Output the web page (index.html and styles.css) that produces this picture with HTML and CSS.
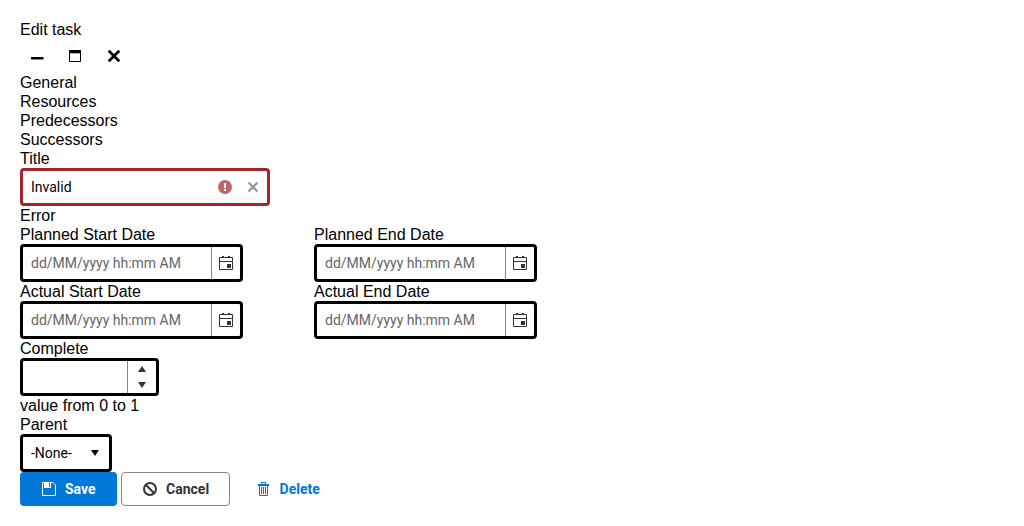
FILE: index.html
```html
<!DOCTYPE html>
<html lang="en">
<head>
<meta charset="utf-8">
<meta name="viewport" content="width=device-width, initial-scale=1">
<title>Edit task</title>
<link rel="stylesheet" href="styles.css">
</head>
<body>
<main class="dialog">
  <header>
    <div class="dialog-title">Edit task</div>
    <div class="window-actions">
      <button class="icon-button" type="button" aria-label="Minimize"><svg width="14" height="14" viewBox="0 0 14 14"><path d="M1 8h12.500v2.500H1z" fill="currentColor"/></svg></button>
      <button class="icon-button" type="button" aria-label="Maximize"><svg width="14" height="14" viewBox="0 0 14 14"><path d="M1.500 1.500h11v11h-11z" fill="none" stroke="currentColor"/><path d="M1 1h12v3.300H1z" fill="currentColor"/></svg></button>
      <button class="icon-button" type="button" aria-label="Close"><svg width="14" height="14" viewBox="0 0 14 14"><path d="M1.700 1.700l10.600 10.600M12.300 1.700L1.700 12.300" stroke="currentColor" stroke-width="2.700"/></svg></button>
    </div>
  </header>
  <div class="tabs" role="tablist">
    <button class="tab" type="button" role="tab">General</button>
    <button class="tab" type="button" role="tab">Resources</button>
    <button class="tab" type="button" role="tab">Predecessors</button>
    <button class="tab" type="button" role="tab">Successors</button>
  </div>
  <form>
    <label class="label" for="title">Title</label>
    <div class="field field-title invalid">
      <input class="input" id="title" type="text" value="Invalid" aria-invalid="true" aria-describedby="title-error">
      <svg class="error-icon" width="14" height="14" viewBox="0 0 14 14"><circle cx="7" cy="7" r="7" fill="currentColor"/><path d="M6 3h2v5H6zM6 9h2v2H6z" fill="#fff"/></svg>
      <button class="clear-button" type="button" aria-label="Clear"><svg width="12" height="12" viewBox="0 0 12 12"><path d="M1.500 1.500l9 9M10.500 1.500l-9 9" stroke="currentColor" stroke-width="2.300"/></svg></button>
    </div>
    <div class="hint" id="title-error">Error</div>
    <div class="dates">
      <div>
        <label class="label" for="planned-start">Planned Start Date</label>
        <div class="field field-date">
          <input class="input" id="planned-start" type="text" placeholder="dd/MM/yyyy hh:mm AM">
          <button class="addon" type="button" aria-label="Open calendar"><svg width="14" height="16" viewBox="0 0 14 16"><path d="M.5 2.500h13v12H.5zM1 6.500h12" fill="none" stroke="currentColor"/><path d="M3 1h2v2H3zM9 1h2v2H9zM8 9h4v4H8z" fill="currentColor"/></svg></button>
        </div>
      </div>
      <div>
        <label class="label" for="planned-end">Planned End Date</label>
        <div class="field field-date">
          <input class="input" id="planned-end" type="text" placeholder="dd/MM/yyyy hh:mm AM">
          <button class="addon" type="button" aria-label="Open calendar"><svg width="14" height="16" viewBox="0 0 14 16"><path d="M.5 2.500h13v12H.5zM1 6.500h12" fill="none" stroke="currentColor"/><path d="M3 1h2v2H3zM9 1h2v2H9zM8 9h4v4H8z" fill="currentColor"/></svg></button>
        </div>
      </div>
      <div>
        <label class="label" for="actual-start">Actual Start Date</label>
        <div class="field field-date">
          <input class="input" id="actual-start" type="text" placeholder="dd/MM/yyyy hh:mm AM">
          <button class="addon" type="button" aria-label="Open calendar"><svg width="14" height="16" viewBox="0 0 14 16"><path d="M.5 2.500h13v12H.5zM1 6.500h12" fill="none" stroke="currentColor"/><path d="M3 1h2v2H3zM9 1h2v2H9zM8 9h4v4H8z" fill="currentColor"/></svg></button>
        </div>
      </div>
      <div>
        <label class="label" for="actual-end">Actual End Date</label>
        <div class="field field-date">
          <input class="input" id="actual-end" type="text" placeholder="dd/MM/yyyy hh:mm AM">
          <button class="addon" type="button" aria-label="Open calendar"><svg width="14" height="16" viewBox="0 0 14 16"><path d="M.5 2.500h13v12H.5zM1 6.500h12" fill="none" stroke="currentColor"/><path d="M3 1h2v2H3zM9 1h2v2H9zM8 9h4v4H8z" fill="currentColor"/></svg></button>
        </div>
      </div>
    </div>
    <label class="label" for="complete">Complete</label>
    <div class="field field-number">
      <input class="input" id="complete" type="text" inputmode="decimal" aria-describedby="complete-hint">
      <div class="addon spinner">
        <button class="spin" type="button" aria-label="Increase"><svg width="8" height="6" viewBox="0 0 8 6"><path d="M0 6l4-6 4 6z" fill="currentColor"/></svg></button>
        <button class="spin" type="button" aria-label="Decrease"><svg width="8" height="6" viewBox="0 0 8 6"><path d="M0 0l4 6 4-6z" fill="currentColor"/></svg></button>
      </div>
    </div>
    <div class="hint" id="complete-hint">value from 0 to 1</div>
    <label class="label" for="parent">Parent</label>
    <div class="field field-select">
      <select class="select" id="parent"><option>-None-</option></select>
      <svg class="select-arrow" width="8" height="6" viewBox="0 0 8 6"><path d="M0 0l4 6 4-6z" fill="currentColor"/></svg>
    </div>
    <div class="actions">
      <button class="button button-primary" type="submit"><svg width="14" height="14" viewBox="0 0 14 14"><path d="M.5.500h10.500l2.500 2.500v10.500H.5z" fill="none" stroke="currentColor"/><path d="M2 0h7v6H2zM7 1v4h1V1z" fill="currentColor" fill-rule="evenodd"/></svg>Save</button>
      <button class="button button-outline" type="button"><svg width="14" height="14" viewBox="0 0 14 14"><circle cx="7" cy="7" r="6" fill="none" stroke="currentColor" stroke-width="2"/><path d="M3 3l8 8" stroke="currentColor" stroke-width="2"/></svg>Cancel</button>
      <button class="button button-link" type="button"><svg width="14" height="14" viewBox="0 0 14 14"><path d="M1 2h11v2H1z" fill="currentColor"/><path d="M4.500 2V.500h4V2M2.500 4v9.500h8V4M4.500 5v7M6.500 5v7M8.500 5v7" fill="none" stroke="currentColor"/></svg>Delete</button>
    </div>
  </form>
</main>
</body>
</html>
```
FILE: styles.css
```css
* {
  box-sizing: border-box;
}

body {
  margin: 0;
  padding: 20px;
  background: #fff;
  color: #000;
  font: 16px/19px "Liberation Sans", Arial, sans-serif;
}

button,
input,
select {
  margin: 0;
  padding: 0;
  border: 0;
  background: transparent;
  color: inherit;
  font: inherit;
}

svg {
  display: block;
  flex: none;
}

.icon-button {
  display: inline-grid;
  place-items: center;
  width: 34px;
  height: 34px;
  vertical-align: top;
}

.tabs {
  display: flex;
  flex-direction: column;
  align-items: flex-start;
}

.label {
  display: block;
  width: fit-content;
}

.field {
  display: flex;
  align-items: center;
  max-width: 100%;
  height: 38px;
  border: 3px solid #000;
  border-radius: 4px;
  font: 14px/20px Roboto, sans-serif;
}

.field-title {
  width: 250px;
}

.field-date {
  width: 223px;
}

.field-number {
  width: 139px;
}

.invalid {
  border-color: #a4262c;
}

.input {
  flex: 1;
  min-width: 0;
  height: 100%;
  padding: 0 8px;
}

.input::placeholder {
  color: #666;
  opacity: 1;
}

.error-icon {
  color: #bf666a;
}

.clear-button {
  display: grid;
  place-items: center;
  width: 28px;
  height: 28px;
  margin-left: 7px;
  color: #999;
}

.addon {
  display: grid;
  place-items: center;
  width: 29px;
  height: 100%;
  border-left: 1px solid #848484;
  color: #333;
}

.spinner {
  grid-template-rows: 1fr 1fr;
}

.spin {
  display: grid;
  place-items: center;
  width: 100%;
  height: 100%;
}

.field-select {
  display: grid;
  width: 92px;
}

.select {
  grid-area: 1 / 1;
  width: 100%;
  height: 100%;
  padding: 0 24px 0 8px;
  appearance: none;
}

.select-arrow {
  grid-area: 1 / 1;
  justify-self: end;
  margin-right: 10px;
  pointer-events: none;
}

.dates {
  display: grid;
  grid-template-columns: repeat(2, 223px);
  column-gap: 71px;
}

.button {
  display: inline-flex;
  align-items: center;
  gap: 9px;
  height: 34px;
  padding: 0 20px 0 21px;
  border: 1px solid transparent;
  border-radius: 4px;
  font: bold 14px/20px Roboto, sans-serif;
  vertical-align: top;
}

.button-primary {
  background: #0078d7;
  color: #fff;
}

.button-outline {
  border-color: #848484;
  color: #333;
}

.button-link {
  color: #0078d7;
}
```
